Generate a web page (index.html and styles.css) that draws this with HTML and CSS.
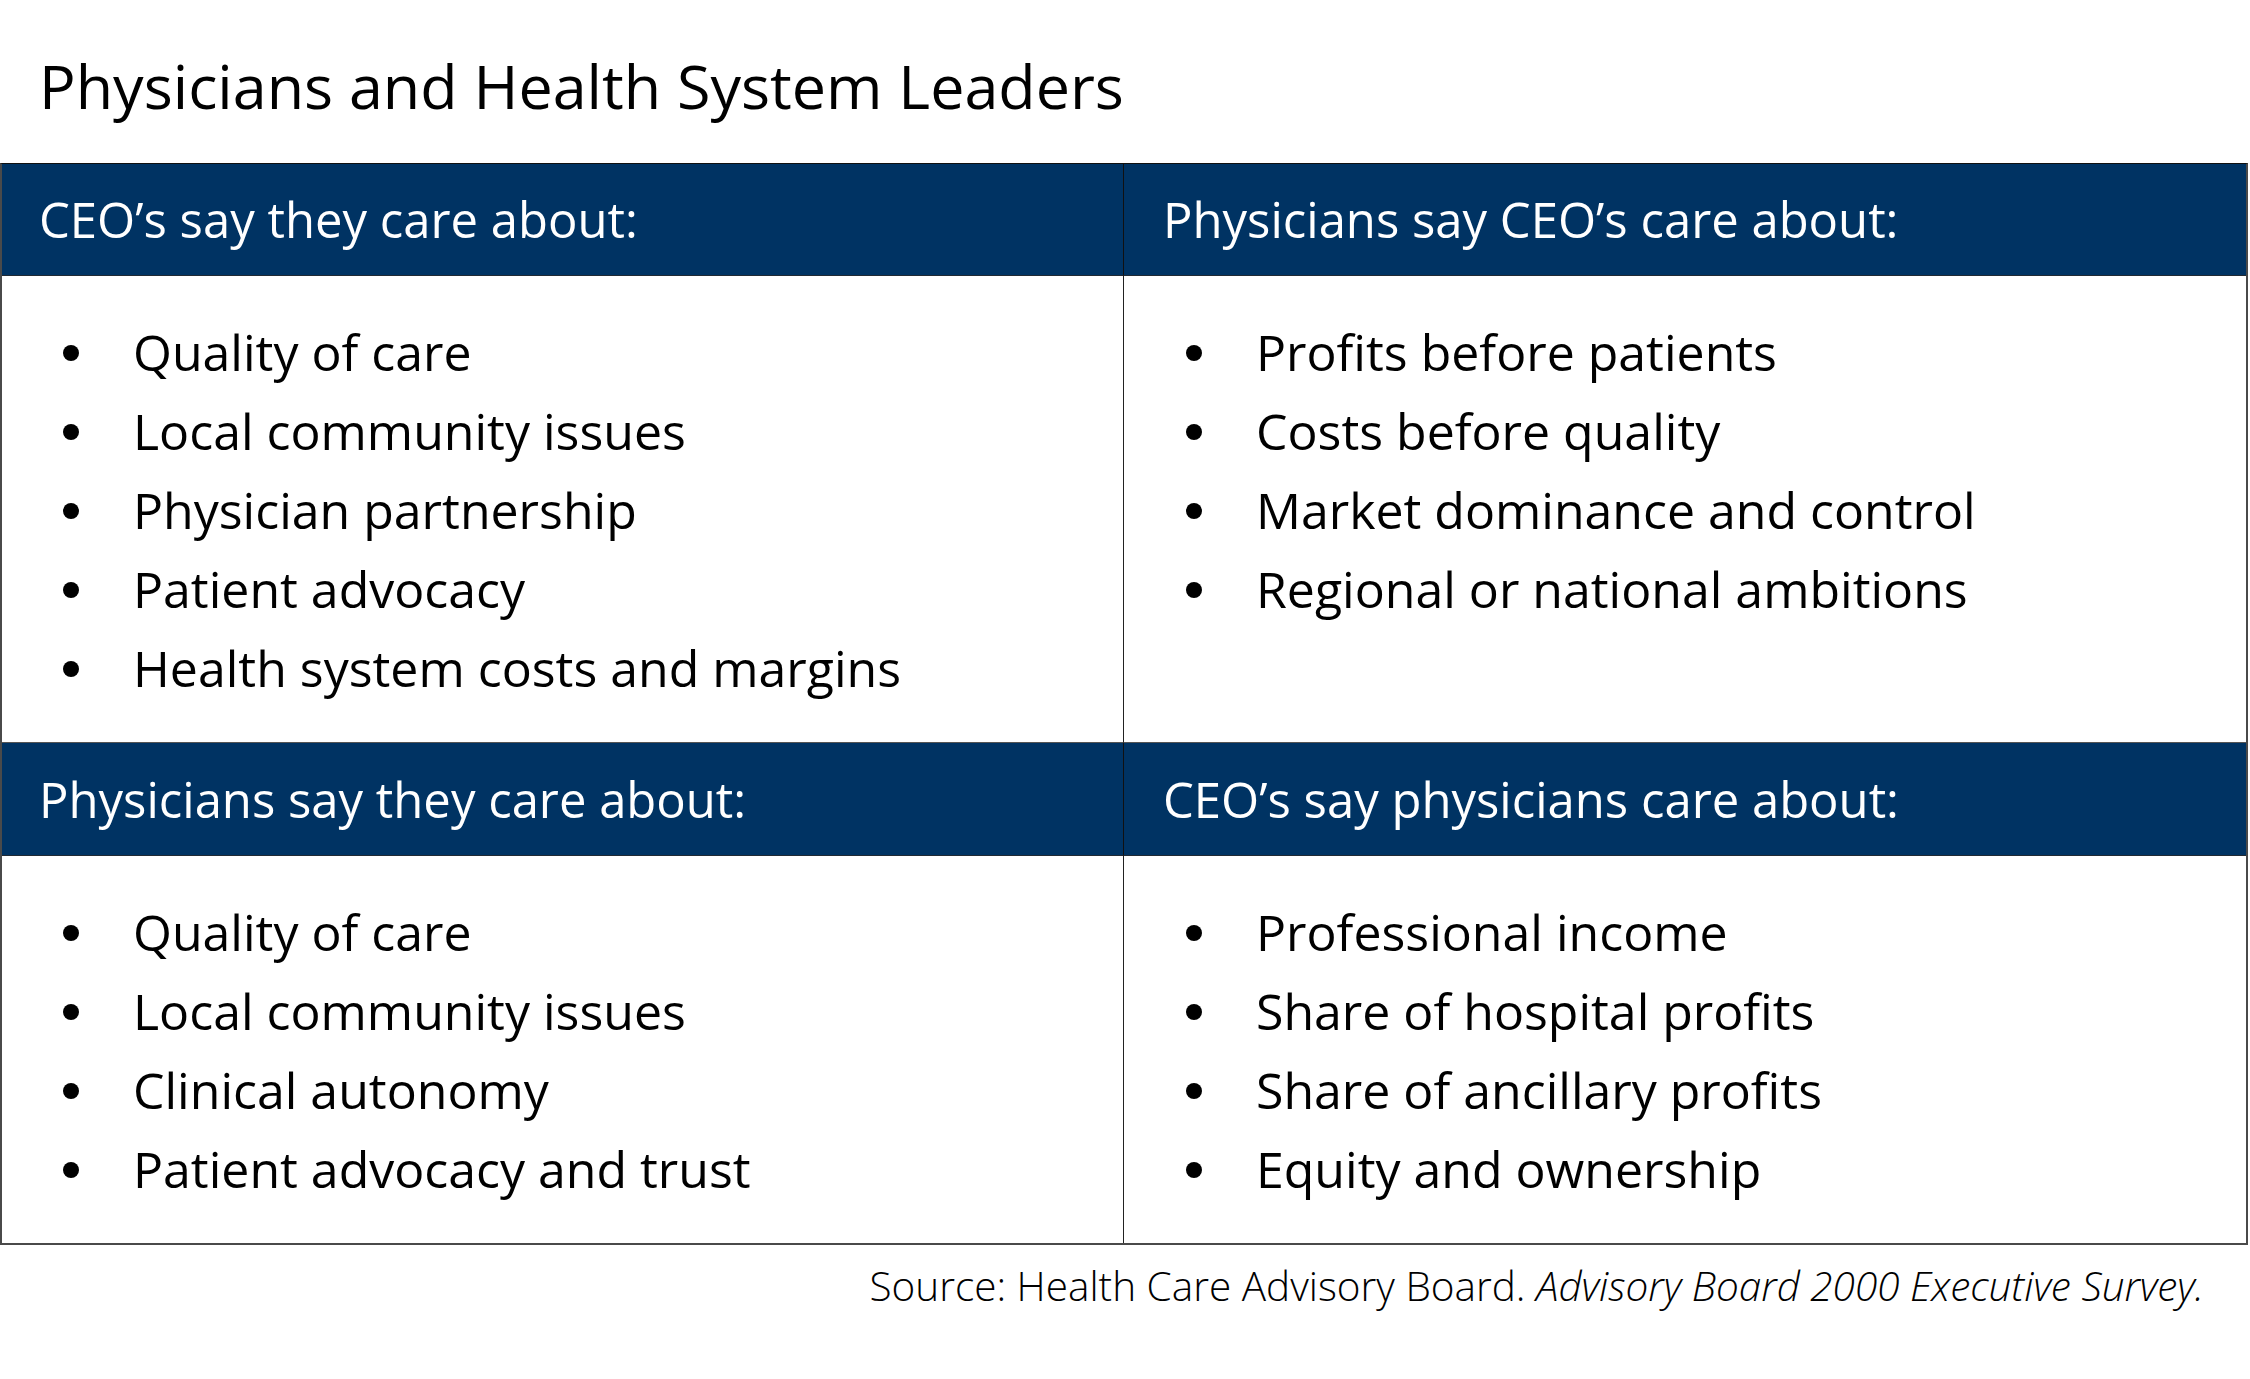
FILE: index.html
```html
<!DOCTYPE html>
<html lang="en">
<head>
<meta charset="utf-8">
<title>Physicians and Health System Leaders</title>
<link rel="stylesheet" href="styles.css">
</head>
<body>
<main class="page">
  <h1 class="title">Physicians and Health System Leaders</h1>
  <section class="grid">
    <div class="head head-left">CEO’s say they care about:</div>
    <div class="head head-right">Physicians say CEO’s care about:</div>
    <div class="body body-left">
      <ul class="items">
        <li>Quality of care</li>
        <li>Local community issues</li>
        <li>Physician partnership</li>
        <li>Patient advocacy</li>
        <li>Health system costs and margins</li>
      </ul>
    </div>
    <div class="body body-right">
      <ul class="items">
        <li>Profits before patients</li>
        <li>Costs before quality</li>
        <li>Market dominance and control</li>
        <li>Regional or national ambitions</li>
      </ul>
    </div>
    <div class="head head-left head-second">Physicians say they care about:</div>
    <div class="head head-right head-second">CEO’s say physicians care about:</div>
    <div class="body body-left">
      <ul class="items">
        <li>Quality of care</li>
        <li>Local community issues</li>
        <li>Clinical autonomy</li>
        <li>Patient advocacy and trust</li>
      </ul>
    </div>
    <div class="body body-right">
      <ul class="items">
        <li>Professional income</li>
        <li>Share of hospital profits</li>
        <li>Share of ancillary profits</li>
        <li>Equity and ownership</li>
      </ul>
    </div>
  </section>
  <p class="source">Source: Health Care Advisory Board. <em>Advisory Board 2000 Executive Survey.</em></p>
</main>
</body>
</html>
```
FILE: styles.css
```css
html, body {
  margin: 0;
  padding: 0;
  background: #ffffff;
}

body {
  font-family: "Open Sans", "Noto Sans", sans-serif;
  color: #000000;
}

.page {
  width: 2250px;
}

.title {
  margin: 0;
  padding: 44px 0 0 39px;
  height: 163px;
  box-sizing: border-box;
  font-size: 61px;
  font-weight: 400;
  line-height: 84px;
}

.grid {
  display: grid;
  grid-template-columns: 1122px 1122px;
  width: 2244px;
  border: 2px solid #4a4a4a;
  border-top: 1px solid #111111;
}

.head {
  background: #003363;
  color: #ffffff;
  height: 112px;
  display: flex;
  align-items: center;
  font-size: 49px;
  line-height: 1;
  border-bottom: 1px solid #222a33;
  box-sizing: border-box;
}

.head-left {
  padding-left: 37px;
  border-right: 1px solid #111111;
}

.head-right {
  padding-left: 39px;
}

.head-second {
  height: 114px;
  border-top: 1px solid #555555;
}

.body {
  padding: 37px 0 34px 0;
}

.body-left {
  border-right: 1px solid #222222;
}

.items {
  list-style: none;
  margin: 0;
  padding: 0;
}

.items li {
  position: relative;
  font-size: 50px;
  line-height: 79px;
  height: 79px;
}

.body-left .items li {
  padding-left: 131px;
}

.body-right .items li {
  padding-left: 132px;
}

.items li::before {
  content: "";
  position: absolute;
  top: 32px;
  width: 16px;
  height: 16px;
  border-radius: 50%;
  background: #000000;
}

.body-left .items li::before {
  left: 61px;
}

.body-right .items li::before {
  left: 62px;
}

.source {
  margin: 0;
  padding: 14px 46px 0 0;
  text-align: right;
  font-size: 40.5px;
  font-weight: 300;
  line-height: 54px;
  color: #000000;
}

.source em {
  font-style: italic;
}
```
